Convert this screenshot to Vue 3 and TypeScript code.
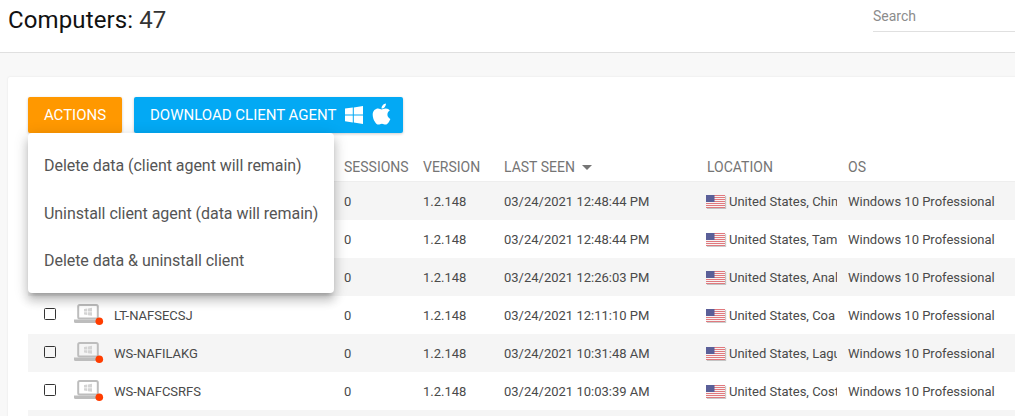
<script setup lang="ts">
interface Row {
  name: string;
  time: string;
  location: string;
  covered: boolean;
}

const rows: Row[] = [
  { name: '', time: '12:48:44 PM', location: 'United States, Chin', covered: true },
  { name: '', time: '12:48:44 PM', location: 'United States, Tam', covered: true },
  { name: '', time: '12:26:03 PM', location: 'United States, Anal', covered: true },
  { name: 'LT-NAFSECSJ', time: '12:11:10 PM', location: 'United States, Coa', covered: false },
  { name: 'WS-NAFILAKG', time: '10:31:48 AM', location: 'United States, Lagu', covered: false },
  { name: 'WS-NAFCSRFS', time: '10:03:39 AM', location: 'United States, Cost', covered: false },
];

const menu = [
  'Delete data (client agent will remain)',
  'Uninstall client agent (data will remain)',
  'Delete data & uninstall client',
];

const stripes = [0, 2, 4, 6, 8, 10, 12];
</script>

<template>
  <div class="page">
    <header class="topbar">
      <h1 class="title">Computers: <span class="count">47</span></h1>
      <div class="search">Search</div>
    </header>

    <main class="content">
      <section class="card">
        <div class="toolbar">
          <div class="actions-wrap">
            <button class="btn btn-orange" type="button">ACTIONS</button>
            <ul class="menu">
              <li v-for="item in menu" :key="item" class="menu-item">{{ item }}</li>
            </ul>
          </div>
          <button class="btn btn-blue" type="button">
            <span>DOWNLOAD CLIENT AGENT</span>
            <svg class="win-icon" viewBox="0 0 18 18" aria-hidden="true">
              <path d="M0 2.6 7.8 1.5V8.4H0ZM8.8 1.4 18 0V8.4H8.8ZM0 9.4H7.8V16.4L0 15.3ZM8.8 9.4H18V18L8.8 16.6Z" fill="#fff" />
            </svg>
            <svg class="apple-icon" viewBox="0 0 384 512" aria-hidden="true">
              <path fill="#fff" d="M318.7 268.7c-.2-36.7 16.4-64.4 50-84.8-18.8-26.9-47.2-41.7-84.7-44.6-35.5-2.8-74.3 20.7-88.5 20.7-15 0-49.4-19.7-76.4-19.7C63.3 141.2 4 184.8 4 273.5q0 39.3 14.4 81.2c12.8 36.7 59 126.7 107.2 125.2 25.2-.6 43-17.9 75.8-17.9 31.8 0 48.3 17.9 76.4 17.9 48.6-.7 90.4-82.5 102.6-119.3-65.2-30.7-61.7-90-61.7-91.9zm-56.6-164.2c27.3-32.4 24.8-61.9 24-72.5-24.1 1.4-52 16.4-67.9 34.9-17.5 19.8-27.8 44.3-25.6 71.9 26.1 2 49.9-11.4 69.5-34.3z" />
            </svg>
          </button>
        </div>

        <div class="table">
          <div class="row head">
            <span></span>
            <span></span>
            <span>SESSIONS</span>
            <span>VERSION</span>
            <span class="sorted">LAST SEEN <i class="caret"></i></span>
            <span>LOCATION</span>
            <span>OS</span>
          </div>
          <div v-for="(row, i) in rows" :key="i" class="row body" :class="{ odd: i % 2 === 0 }">
            <span class="select">
              <template v-if="!row.covered">
                <i class="check"></i>
                <svg class="pc" viewBox="0 0 30 23" aria-hidden="true">
                  <rect x="4.2" y="1" width="19.6" height="13.6" rx="1.5" fill="none" stroke="#bdbdbd" stroke-width="2" />
                  <path d="M0 15.4H23.5V19H1.5Q0 19 0 17.5Z" fill="#bdbdbd" />
                  <path d="M10 5 13.3 4.5V7.5H10ZM14 4.4 18 3.8V7.5H14ZM10 8.2H13.3V11L10 10.6ZM14 8.2H18V11.8L14 11.2Z" fill="#d4d4d4" />
                  <circle cx="25.3" cy="17.2" r="3.8" fill="#ff3d00" />
                </svg>
              </template>
            </span>
            <span class="name">{{ row.name }}</span>
            <span>0</span>
            <span>1.2.148</span>
            <span>03/24/2021 {{ row.time }}</span>
            <span class="loc">
              <svg class="flag" viewBox="0 0 19 13" aria-hidden="true">
                <rect width="19" height="13" fill="#f7f3f3" />
                <rect v-for="y in stripes" :key="y" x="0" :y="y" width="19" height="1" fill="#e0797e" />
                <rect width="8.5" height="7" fill="#5a5f98" />
              </svg>
              <span class="loc-text">{{ row.location }}</span>
            </span>
            <span>Windows 10 Professional</span>
          </div>
          <div class="row body odd"></div>
        </div>
      </section>
    </main>
  </div>
</template>

<style>
html,
body {
  margin: 0;
  overflow: hidden;
}
</style>

<style scoped>
.page {
  width: 1015px;
  height: 416px;
  overflow: hidden;
  background: #f8f8f8;
  font-family: Roboto, "Liberation Sans", sans-serif;
  color: #424242;
}

.topbar {
  box-sizing: border-box;
  height: 53px;
  background: #fff;
  border-bottom: 1px solid #e0e0e0;
  display: flex;
  justify-content: space-between;
  padding-left: 8px;
}

.title {
  margin: 5px 0 0;
  font-size: 24px;
  letter-spacing: 0.12px;
  line-height: 30px;
  font-weight: 400;
  color: #111;
}

.count {
  color: #333;
}

.search {
  box-sizing: border-box;
  width: 142px;
  height: 32px;
  border-bottom: 1px solid #e0e0e0;
  font-size: 14px;
  line-height: 32px;
  color: #8c8c8c;
}

.content {
  padding: 24px 0 0 8px;
}

.card {
  width: 1040px;
  background: #fff;
  border-radius: 2px;
  box-shadow: 0 0 2px rgba(0, 0, 0, 0.1);
  padding: 20px 0 0 20px;
  height: 360px;
  box-sizing: border-box;
}

.toolbar {
  display: flex;
  gap: 12px;
  height: 36px;
}

.actions-wrap {
  position: relative;
  z-index: 2;
}

.btn {
  height: 36px;
  border: 0;
  border-radius: 2px;
  color: #fff;
  font-family: inherit;
  font-size: 15px;
  line-height: 36px;
  padding: 0 16px;
  box-shadow: 0 1px 3px rgba(0, 0, 0, 0.2);
  display: flex;
  align-items: center;
}

.btn-orange {
  width: 94px;
  justify-content: center;
  background: #ff9800;
}

.btn-blue {
  width: 269px;
  background: #03a9f4;
  white-space: nowrap;
}

.win-icon {
  width: 18px;
  height: 18px;
  margin: 0 0 0 8px;
  flex: none;
}

.apple-icon {
  width: 19px;
  height: 24px;
  margin: -3px 0 0 9px;
  flex: none;
}

.menu {
  position: absolute;
  left: 0;
  top: 36px;
  width: 306px;
  box-sizing: border-box;
  margin: 0;
  padding: 9px 0 7.8px;
  list-style: none;
  background: #fff;
  border-radius: 4px;
  box-shadow: 0 5px 5px -3px rgba(0, 0, 0, 0.2), 0 8px 10px 1px rgba(0, 0, 0, 0.14), 0 3px 14px 2px rgba(0, 0, 0, 0.12);
}

.menu-item {
  height: 47.6px;
  line-height: 47.6px;
  padding: 0 16px;
  font-size: 16px;
  letter-spacing: -0.05px;
  color: #555;
  white-space: nowrap;
}

.table {
  margin-top: 15px;
}

.row {
  display: grid;
  grid-template-columns: 86px 230px 79px 81px 203px 141px 1fr;
  align-items: center;
  font-size: 13px;
}

.head {
  height: 34px;
  padding-top: 4px;
  box-sizing: border-box;
  border-bottom: 1px solid #eee;
  font-size: 14px;
  color: #757575;
}

.body {
  height: 38px;
  color: #4a4a4a;
}

.odd {
  background: #f5f5f5;
}

.caret {
  display: inline-block;
  width: 0;
  height: 0;
  margin-left: 4px;
  vertical-align: 2px;
  border-left: 5px solid transparent;
  border-right: 5px solid transparent;
  border-top: 5px solid #757575;
}

.select {
  display: flex;
  align-items: center;
  height: 100%;
  position: relative;
}

.check {
  box-sizing: border-box;
  width: 12px;
  height: 12px;
  margin: -2px 0 0 16px;
  border: 1.5px solid #333;
  border-radius: 1.5px;
  flex: none;
}

.pc {
  width: 30px;
  height: 23px;
  margin: 0 0 0 18px;
  flex: none;
}

.loc {
  display: flex;
  align-items: center;
  width: 131px;
  margin-left: -1px;
  overflow: hidden;
  white-space: nowrap;
}

.flag {
  width: 19px;
  height: 13px;
  margin-right: 4px;
  flex: none;
  box-shadow: 1px 1px 1px rgba(0, 0, 0, 0.2);
}

.loc-text {
  flex: none;
}
</style>
